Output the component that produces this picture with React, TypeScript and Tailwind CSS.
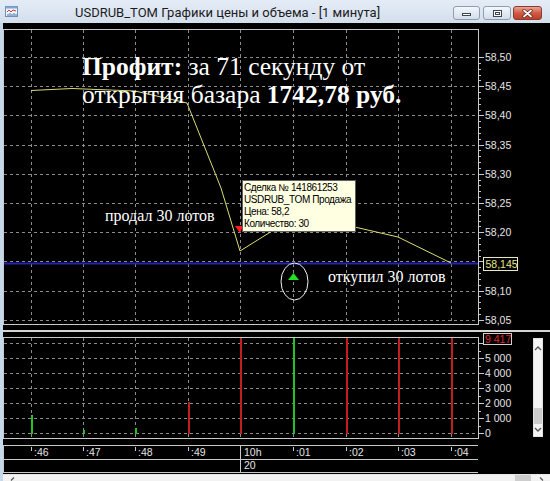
import React from 'react';

// chart geometry (page coords)
const GX = [31, 83, 135, 188, 240, 293, 346, 398, 451];
const PRICES = ['58,50', '58,45', '58,40', '58,35', '58,30', '58,25', '58,20', '58,15', '58,10', '58,05'];
const py = (k: number) => 57 + 29.2 * k;

const LINE = [
  [31, 90.5], [72, 88.5], [135, 91], [187, 103], [221, 188], [240, 251],
  [293, 218], [346, 225], [398, 237], [451, 263],
];

const GREEN = '#22c422';
const RED = '#c21e1e';

const BARS = [
  { x: 31, top: 415, c: GREEN },
  { x: 83, top: 430, c: GREEN },
  { x: 135, top: 428, c: GREEN },
  { x: 188, top: 402, c: RED },
  { x: 240, top: 338, c: RED },
  { x: 293, top: 338, c: GREEN },
  { x: 346, top: 338, c: RED },
  { x: 398, top: 338, c: RED },
  { x: 451, top: 338, c: RED },
];

const VGRID = [343, 358, 373, 388, 403, 418, 433];
const VLABELS = ['5 000', '4 000', '3 000', '2 000', '1 000', '0'];
const TIMES = [':46', ':47', ':48', ':49', '10h', ':01', ':02', ':03', ':04'];

const FRAME = '#c9c9c9';
const GRID = '#8c8c8c';
const AXIS_TEXT = '#e4e4e4';
const axisFont = { fontFamily: '"Liberation Sans", Arial, sans-serif', fontSize: 10.5 };

function AppIcon() {
  return (
    <svg width="13" height="11" viewBox="0 0 13 11">
      <rect x="0.5" y="0.5" width="12" height="10" fill="#eef4fb" stroke="#6d8fb8" />
      <rect x="0.5" y="0.5" width="12" height="2" fill="#7fa6d4" />
      <polyline points="2,6 4,4 6,6 8,4 11,5" fill="none" stroke="#d23a3a" strokeWidth="1" />
      <path d="M3 10V8M5 10V7M7 10V8M9 10V7M11 10V8" stroke="#3a6ea8" />
    </svg>
  );
}

function TitleBar() {
  return (
    <div className="flex h-[23px] items-start bg-gradient-to-b from-[#e4ecf6] to-[#d4dfec]">
      <div className="ml-[5px] mt-[6px]">
        <AppIcon />
      </div>
      <div
        className="ml-[57px] mt-[4px] text-[13px] leading-[17px] text-[#1c1c1c] whitespace-nowrap"
        style={{ fontFamily: 'Roboto, "Liberation Sans", sans-serif' }}
      >
        USDRUB_TOM Графики цены и объема - [1 минута]
      </div>
      <div className="flex-1" />
      <div className="mt-[6px] mr-[8px] flex gap-[2px]">
        <div className="flex h-[14px] w-[27px] items-end justify-center rounded-[3px] border border-[#8d9db3] bg-gradient-to-b from-[#f4f7fb] to-[#d3ddea] pb-[3px]">
          <div className="h-[3px] w-[9px] border border-[#3b4652] bg-white" />
        </div>
        <div className="ml-[1px] flex h-[14px] w-[28px] items-center justify-center rounded-[3px] border border-[#8d9db3] bg-gradient-to-b from-[#f4f7fb] to-[#d3ddea]">
          <div className="h-[7px] w-[9px] border border-[#3b4652] bg-white p-[1px]">
            <div className="h-full w-full border border-[#3b4652]" />
          </div>
        </div>
        <div className="flex h-[14px] w-[29px] items-center justify-center rounded-[3px] border border-[#8a3b30] bg-gradient-to-b from-[#e9a593] via-[#d05a45] to-[#c03f2a]">
          <svg width="11" height="9" viewBox="0 0 11 9">
            <path d="M2 1.5L9 7.5M9 1.5L2 7.5" stroke="#5a1c14" strokeWidth="3.2" strokeLinecap="round" />
            <path d="M2 1.5L9 7.5M9 1.5L2 7.5" stroke="#ffffff" strokeWidth="1.8" strokeLinecap="round" />
          </svg>
        </div>
      </div>
    </div>
  );
}

function PricePanel() {
  const minor: number[] = [];
  for (let k = 0; k < 46; k++) minor.push(57 + 5.84 * k);
  return (
    <div className="relative h-[305px]">
      <svg width="547" height="305" viewBox="3 23 547 305" className="block">
        <rect x="3" y="23" width="547" height="305" fill="#000" />
        {/* grid */}
        <g stroke={GRID} strokeDasharray="3 3" shapeRendering="crispEdges">
          {GX.map((x) => (
            <line key={x} x1={x + 0.5} y1={30} x2={x + 0.5} y2={324} />
          ))}
          {PRICES.map((_, k) => (
            <line key={k} x1={4} y1={Math.round(py(k)) + 0.5} x2={478} y2={Math.round(py(k)) + 0.5} />
          ))}
        </g>
        {/* frame */}
        <rect x="3.5" y="29.5" width="475" height="295" fill="none" stroke={FRAME} shapeRendering="crispEdges" />
        {/* axis ticks */}
        <g stroke={FRAME} shapeRendering="crispEdges">
          {minor.map((y, i) => (
            <line key={i} x1={478} y1={Math.round(y) + 0.5} x2={i % 5 === 0 ? 484 : 481} y2={Math.round(y) + 0.5} />
          ))}
        </g>
        <g fill={AXIS_TEXT} style={axisFont}>
          {PRICES.map((p, k) =>
            k === 7 ? null : (
              <text key={p} x={485} y={Math.round(py(k)) + 4}>
                {p}
              </text>
            ),
          )}
        </g>
        {/* level line */}
        <rect x="4" y="262.5" width="474" height="2" fill="#2424b4" />
        {/* price */}
        <polyline points={LINE.map((p) => p.join(',')).join(' ')} fill="none" stroke="#dcdc74" strokeWidth="1" />
        {/* trade markers */}
        <polygon points="235,226 243,226 240,233" fill="#ff1e1e" />
        <polygon points="293.5,273 288,280 299,280" fill="#22e022" />
        <ellipse cx="294.5" cy="281.5" rx="13.5" ry="18.5" fill="none" stroke="#f2f2f2" strokeWidth="1" />
        {/* current price box */}
        <rect x="483.5" y="257.5" width="34" height="13" fill="#000" stroke="#e6e6c8" shapeRendering="crispEdges" />
        <text x={485.5} y={268} fill="#e6e680" style={axisFont}>
          58,145
        </text>
      </svg>

      <div
        className="absolute left-[79px] top-[30px] text-[25.5px] leading-[28px] text-white whitespace-nowrap"
        style={{ fontFamily: '"Liberation Serif", "Times New Roman", serif' }}
      >
        <div>
          <span className="font-bold">Профит:</span> за 71 секунду от
        </div>
        <div>
          открытия базара <span className="font-bold">1742,78 руб.</span>
        </div>
      </div>

      <div
        className="absolute left-[102px] top-[185px] text-[16px] leading-[16px] text-white whitespace-nowrap"
        style={{ fontFamily: '"Liberation Serif", "Times New Roman", serif' }}
      >
        продал 30 лотов
      </div>
      <div
        className="absolute left-[325px] top-[246px] text-[16px] leading-[16px] text-white whitespace-nowrap"
        style={{ fontFamily: '"Liberation Serif", "Times New Roman", serif' }}
      >
        откупил 30 лотов
      </div>

      <div
        className="absolute left-[239px] top-[157px] w-[114px] border border-[#5e5e5e] bg-[#ffffe1] px-[1px] py-[1px] text-[10px] leading-[12px] tracking-[-0.4px] text-black whitespace-nowrap"
        style={{ fontFamily: '"Liberation Sans", Arial, sans-serif' }}
      >
        <div>Сделка № 141861253</div>
        <div>USDRUB_TOM Продажа</div>
        <div>Цена: 58,2</div>
        <div>Количество: 30</div>
      </div>
    </div>
  );
}

function VolumePanel() {
  const ticks: number[] = [];
  for (let y = 343; y <= 433; y += 7.5) ticks.push(y);
  return (
    <div className="flex h-[109px]">
      <svg width="530" height="109" viewBox="3 333 530 109" className="block shrink-0">
        <rect x="3" y="333" width="530" height="109" fill="#000" />
        <g stroke={GRID} strokeDasharray="3 3" shapeRendering="crispEdges">
          {GX.map((x) => (
            <line key={x} x1={x + 0.5} y1={338} x2={x + 0.5} y2={438} />
          ))}
          {VGRID.map((y) => (
            <line key={y} x1={4} y1={y + 0.5} x2={478} y2={y + 0.5} />
          ))}
        </g>
        {BARS.map((b) => (
          <rect key={b.x} x={b.x - 0.5} y={b.top} width={2} height={434 - b.top} fill={b.c} shapeRendering="crispEdges" />
        ))}
        <rect x="3.5" y="337.5" width="475" height="101" fill="none" stroke={FRAME} shapeRendering="crispEdges" />
        <g stroke={FRAME} shapeRendering="crispEdges">
          {ticks.map((y, i) => (
            <line key={i} x1={478} y1={Math.round(y) + 0.5} x2={i % 2 === 0 ? 484 : 481} y2={Math.round(y) + 0.5} />
          ))}
        </g>
        <g fill={AXIS_TEXT} style={axisFont}>
          {VLABELS.map((l, i) => (
            <text key={l} x={485} y={358 + 15 * i + 4}>
              {l}
            </text>
          ))}
        </g>
        <rect x="483.5" y="333.5" width="28" height="11" fill="#000" stroke="#d0d0d0" shapeRendering="crispEdges" />
        <text x={485} y={343} fill="#e02828" style={axisFont}>
          9 417
        </text>
      </svg>
      <div className="mt-[5px] flex h-[99px] w-[10px] flex-col items-center border border-[#e2e2e2] bg-[#f4f4f4]">
        <svg width="8" height="6" viewBox="0 0 8 6" className="mt-[6px]">
          <path d="M1 5L4 2L7 5" fill="none" stroke="#555" strokeWidth="1.4" />
        </svg>
        <div className="flex-1" />
        <div className="h-[16px] w-full bg-[#cdcdcd]" />
        <svg width="8" height="6" viewBox="0 0 8 6" className="mb-[3px] mt-[3px]">
          <path d="M1 1L4 4L7 1" fill="none" stroke="#555" strokeWidth="1.4" />
        </svg>
      </div>
    </div>
  );
}

function TimeAxis() {
  return (
    <svg width="547" height="32" viewBox="3 442 547 32" className="block">
      <rect x="3" y="442" width="547" height="32" fill="#000" />
      <g stroke={FRAME} shapeRendering="crispEdges">
        <line x1={3} y1={445.5} x2={478} y2={445.5} />
        <line x1={3} y1={459.5} x2={478} y2={459.5} />
        <line x1={3} y1={472.5} x2={478} y2={472.5} />
        <line x1={3.5} y1={445} x2={3.5} y2={473} />
        <line x1={240.5} y1={445} x2={240.5} y2={473} />
        {GX.filter((x) => x !== 240).map((x) => (
          <line key={x} x1={x + 0.5} y1={447} x2={x + 0.5} y2={451} />
        ))}
      </g>
      <g fill={AXIS_TEXT} style={axisFont}>
        {TIMES.map((t, i) => (
          <text key={t} x={GX[i] + (t === '10h' ? 4 : 3)} y={456}>
            {t}
          </text>
        ))}
        <text x={244} y={469}>
          20
        </text>
      </g>
    </svg>
  );
}

function HScroll() {
  return (
    <div className="flex h-[7px] items-start border-t border-[#e6e6e6] bg-[#f2f2f2]">
      <svg width="5" height="6" viewBox="0 0 5 6" className="ml-[7px] mt-[2px]">
        <path d="M4 0.5L1 3.5" fill="none" stroke="#555" strokeWidth="1.3" />
      </svg>
      <div className="flex-1" />
      <div className="h-full w-[16px] bg-[#cdcdcd]" />
      <svg width="5" height="6" viewBox="0 0 5 6" className="ml-[8px] mr-[6px] mt-[2px]">
        <path d="M1 0.5L4 3.5" fill="none" stroke="#555" strokeWidth="1.3" />
      </svg>
    </div>
  );
}

export default function App() {
  return (
    <div className="h-[481px] w-[550px] overflow-hidden bg-[#cbdaec]">
      <TitleBar />
      <div className="flex h-[458px]">
        <div className="w-[3px] shrink-0 bg-[#c8d8eb]" />
        <div className="flex flex-1 flex-col bg-black">
          <PricePanel />
          <div className="h-[5px] pt-[2px]">
            <div className="h-[2px] bg-[#d4d4d4]" />
          </div>
          <VolumePanel />
          <TimeAxis />
          <HScroll />
        </div>
      </div>
    </div>
  );
}
